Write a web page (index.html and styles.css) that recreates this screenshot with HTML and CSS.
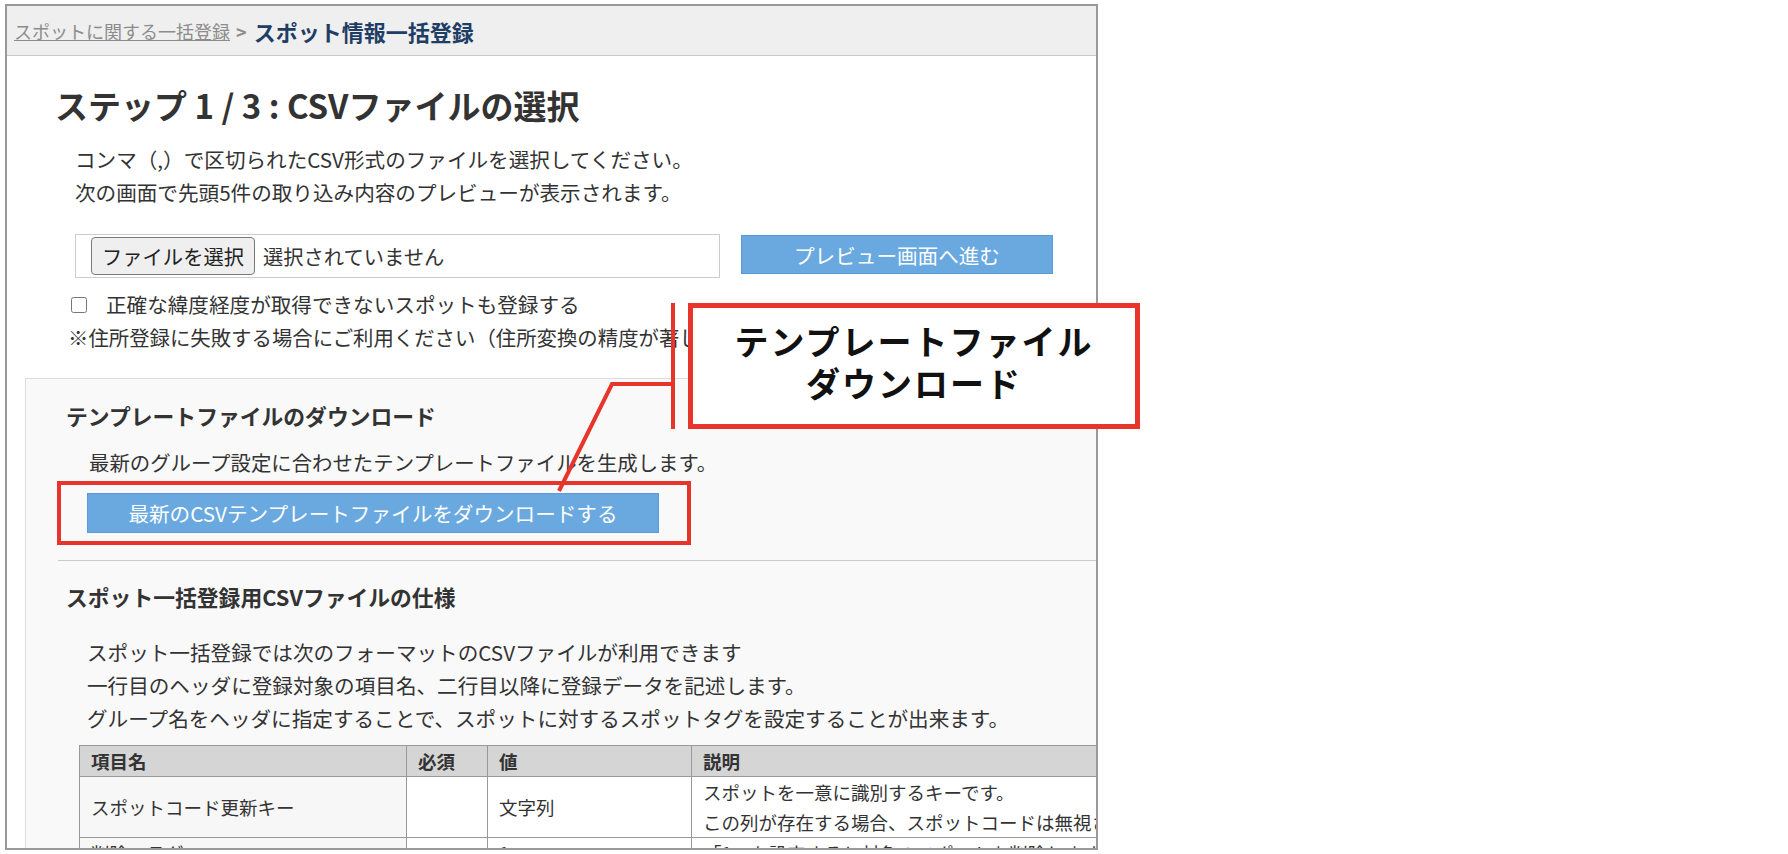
FILE: index.html
```html
<!DOCTYPE html>
<html lang="ja">

<head>
  <meta charset="utf-8">
  <title>スポット情報一括登録</title>
  <link rel="stylesheet" href="styles.css">
</head>

<body>
  <div class="frame">
    <!-- breadcrumb -->
    <div class="breadcrumb">
      <a class="crumb-link" href="#">スポットに関する一括登録</a>
      <span class="crumb-sep">&gt;</span>
      <span class="crumb-current">スポット情報一括登録</span>
    </div>

    <div class="main">
      <h1 class="step-title">ステップ 1 / 3 : CSVファイルの選択</h1>
      <div class="lead">
        <p>コンマ（,）で区切られたCSV形式のファイルを選択してください。</p>
        <p>次の画面で先頭5件の取り込み内容のプレビューが表示されます。</p>
      </div>

      <div class="upload">
        <div class="upload-box">
          <button class="file-btn" type="button">ファイルを選択</button>
          <span class="file-name">選択されていません</span>
        </div>
        <button class="preview-btn" type="button">プレビュー画面へ進む</button>
      </div>

      <label class="check">
        <input type="checkbox" class="check-input">
        <span>正確な緯度経度が取得できないスポットも登録する</span>
      </label>
      <p class="note">※住所登録に失敗する場合にご利用ください（住所変換の精度が著しく低下します）</p>

      <!-- spec box -->
      <div class="spec">
        <div class="spec-section">
          <h2 class="spec-title">テンプレートファイルのダウンロード</h2>
          <p class="spec-text">最新のグループ設定に合わせたテンプレートファイルを生成します。</p>
          <button class="download-btn" type="button">最新のCSVテンプレートファイルをダウンロードする</button>
        </div>

        <div class="spec-section spec-section-line">
          <h2 class="spec-title">スポット一括登録用CSVファイルの仕様</h2>
          <div class="spec-lines">
            <p>スポット一括登録では次のフォーマットのCSVファイルが利用できます</p>
            <p>一行目のヘッダに登録対象の項目名、二行目以降に登録データを記述します。</p>
            <p>グループ名をヘッダに指定することで、スポットに対するスポットタグを設定することが出来ます。</p>
          </div>

          <table class="spec-table">
            <colgroup>
              <col class="col-name">
              <col class="col-req">
              <col class="col-val">
              <col class="col-desc">
            </colgroup>
            <tr>
              <th>項目名</th>
              <th>必須</th>
              <th>値</th>
              <th>説明</th>
            </tr>
            <tr>
              <td class="cell-name">スポットコード更新キー</td>
              <td></td>
              <td>文字列</td>
              <td>スポットを一意に識別するキーです。<br>この列が存在する場合、スポットコードは無視されます。</td>
            </tr>
            <tr>
              <td class="cell-name">削除フラグ</td>
              <td></td>
              <td>1</td>
              <td>「1」を設定すると対象のスポットを削除します。</td>
            </tr>
          </table>
        </div>
      </div>
    </div>
  </div>

  <!-- annotations drawn over the screenshot -->
  <div class="highlight"></div>
  <svg class="connector" width="700" height="500" viewBox="0 0 700 500">
    <line x1="673" y1="303" x2="673" y2="429" stroke="#e8352b" stroke-width="4" />
    <polyline points="673,384 612,384 559,491" fill="none" stroke="#e8352b" stroke-width="4" />
  </svg>
  <div class="callout">テンプレートファイル<br>ダウンロード</div>
</body>

</html>
```

FILE: styles.css
```css
body {
  margin: 0;
  background-color: #fff;
  color: #333;
  font-family: "Noto Sans CJK JP", "Noto Sans", sans-serif;
}

p {
  margin: 0;
}

.frame {
  margin: 4px 0 0 5px;
  width: 1093px;
  height: 846px;
  border: 2px solid #999;
  box-sizing: border-box;
  overflow: hidden;
}

/* breadcrumb */
.breadcrumb {
  height: 49px;
  display: flex;
  align-items: center;
  padding-left: 7px;
  background-color: #efefef;
  border-bottom: 1px solid #c8c8c8;
  white-space: nowrap;
}

.crumb-link {
  color: #8c8c8c;
  font-size: 18px;
  text-decoration: underline;
}

.crumb-sep {
  color: #8c8c8c;
  font-size: 18px;
  font-weight: 700;
  margin: 0 7px 0 6px;
}

.crumb-current {
  color: #1f3e66;
  font-size: 22px;
  font-weight: 700;
}

.main {
  padding-left: 18px;
}

.step-title {
  margin: 29px 0 0 30px;
  font-size: 33px;
  line-height: 40px;
  font-weight: 700;
  color: #333;
}

.lead {
  margin: 18px 0 0 50px;
  font-size: 20.6px;
  line-height: 33px;
  white-space: nowrap;
}

/* upload row */
.upload {
  display: flex;
  gap: 21px;
  margin: 25px 0 0 50px;
}

.upload-box {
  width: 645px;
  height: 44px;
  box-sizing: border-box;
  border: 1px solid #ccc;
  display: flex;
  align-items: center;
  padding-left: 15px;
  background-color: #fff;
}

.file-btn {
  width: 164px;
  height: 38px;
  font-family: inherit;
  font-size: 20.3px;
  color: #222;
  background-color: #efefef;
  border: 1px solid #7a7a7a;
  border-radius: 4px;
  padding: 0;
}

.file-name {
  margin-left: 8px;
  font-size: 20.3px;
}

.preview-btn {
  width: 312px;
  height: 39px;
  margin-top: 1px;
  font-family: inherit;
  font-size: 20.6px;
  color: #fff;
  background-color: #69a9e0;
  border: 1px solid #5b9ad6;
  padding: 0;
}

.check {
  display: flex;
  align-items: center;
  margin: 10px 0 0 46px;
  font-size: 20.6px;
  line-height: 33px;
}

.check-input {
  width: 16px;
  height: 16px;
  margin: 0 19px 0 0;
}

.note {
  margin-left: 43px;
  font-size: 20.4px;
  line-height: 33px;
  white-space: nowrap;
}

/* spec box */
.spec {
  margin-top: 24px;
  background-color: #f9f9f9;
  border-top: 1px solid #ddd;
  border-left: 1px solid #ddd;
}

.spec-section {
  margin-left: 32px;
  padding: 22px 0 27px 0;
}

.spec-section-line {
  border-top: 1px solid #ccc;
  padding-top: 21px;
}

.spec-title {
  margin: 0 0 0 8px;
  font-size: 21.8px;
  line-height: 30px;
  font-weight: 700;
  color: #333;
}

.spec-text {
  margin: 15px 0 0 31px;
  font-size: 20.4px;
  line-height: 33px;
  white-space: nowrap;
}

.download-btn {
  display: block;
  width: 572px;
  height: 40px;
  margin: 14px 0 0 29px;
  font-family: inherit;
  font-size: 20.6px;
  color: #fff;
  background-color: #69a9e0;
  border: 1px solid #5b9ad6;
  padding: 0;
}

.spec-lines {
  margin: 24px 0 0 29px;
  font-size: 20.6px;
  line-height: 33px;
  white-space: nowrap;
}

.spec-table {
  width: 1200px;
  margin: 10px 0 0 21px;
  table-layout: fixed;
  border-collapse: collapse;
  font-size: 18.5px;
  line-height: 30px;
  white-space: nowrap;
  background-color: #fff;
}

.spec-table th,
.spec-table td {
  border: 1px solid #999;
  padding: 0 11px;
  text-align: left;
  vertical-align: middle;
}

.spec-table th {
  background-color: #d5d5d5;
  font-weight: 700;
}

.spec-table .cell-name {
  background-color: #f7f7f7;
}

.col-name {
  width: 327px;
}

.col-req {
  width: 81px;
}

.col-val {
  width: 204px;
}

.col-desc {
  width: 588px;
}

/* annotations */
.highlight {
  position: absolute;
  left: 57px;
  top: 481px;
  width: 634px;
  height: 64px;
  box-sizing: border-box;
  border: 4px solid #e8352b;
}

.connector {
  position: absolute;
  left: 0;
  top: 0;
}

.callout {
  position: absolute;
  left: 688px;
  top: 303px;
  width: 452px;
  height: 126px;
  box-sizing: border-box;
  border: 5px solid #e8352b;
  background-color: #fff;
  padding-top: 12px;
  text-align: center;
  font-size: 34px;
  line-height: 42px;
  font-weight: 700;
  letter-spacing: 2px;
  color: #111;
}
```
